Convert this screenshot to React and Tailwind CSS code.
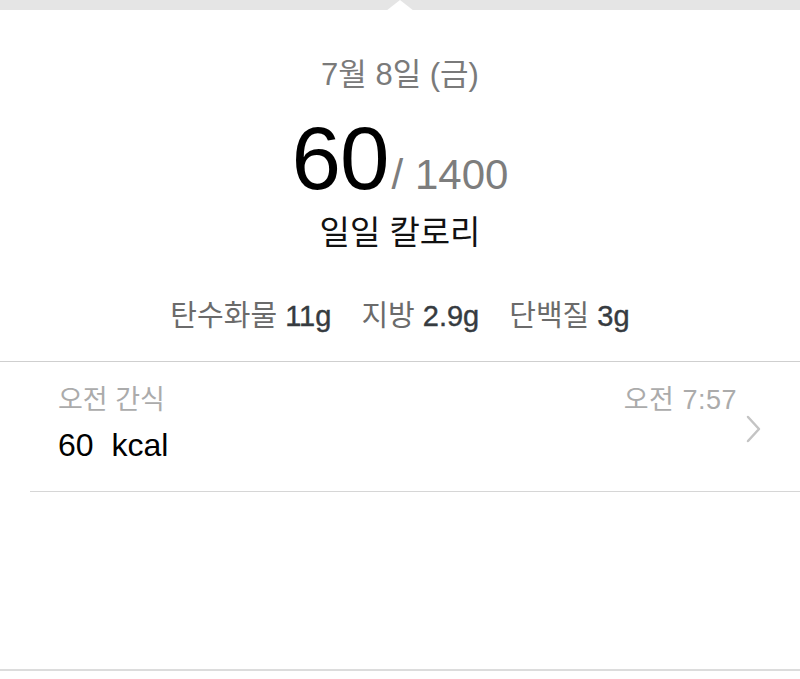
const font = { fontFamily: '"Liberation Sans", "Noto Sans CJK KR", sans-serif' };

const App = () => {
  return (
    <div className="w-[800px] h-[679px] bg-white flex flex-col overflow-hidden" style={font}>
      <div className="relative h-[10px] bg-[#e5e5e5] shrink-0">
        <div className="absolute left-[386px] top-0 w-0 h-0 border-l-[14px] border-r-[14px] border-b-[11px] border-l-transparent border-r-transparent border-b-white" />
      </div>

      <div className="flex flex-col items-center">
        <div className="mt-[47px] h-[36px] text-[31px] leading-[36px] text-[#7a7a7a]">7월 8일 (금)</div>
        <div className="mt-[26px] flex items-baseline h-[78px]">
          <span className="text-[89px] leading-[78px] text-black tracking-[-1px]">60</span>
          <span className="text-[42px] leading-[40px] text-[#7d7d7d] ml-[3px]">/ 1400</span>
        </div>
        <div className="mt-[16px] h-[40px] text-[33px] leading-[40px] text-[#111]">일일 칼로리</div>
        <div className="mt-[45px] h-[36px] text-[29px] leading-[36px] flex gap-[30px]">
          <span className="text-[#6b6b6b]">탄수화물 <span className="text-[#363b40] [-webkit-text-stroke:0.4px_#363b40]">11g</span></span>
          <span className="text-[#6b6b6b]">지방 <span className="text-[#363b40] [-webkit-text-stroke:0.4px_#363b40]">2.9g</span></span>
          <span className="text-[#6b6b6b]">단백질 <span className="text-[#363b40] [-webkit-text-stroke:0.4px_#363b40]">3g</span></span>
        </div>
      </div>

      <div className="mt-[27px] h-px bg-[#cfcfcf]" />

      <div className="flex items-center pl-[58px] pr-[38px] h-[129px]">
        <div className="flex-1 flex flex-col">
          <div className="flex justify-between h-[32px] text-[27px] leading-[32px] text-[#ababab] mt-[-8px]">
            <span>오전 간식</span>
            <span className="mr-[7px] tracking-[0.5px]">오전 7:57</span>
          </div>
          <div className="mt-[12px] h-[34px] text-[32px] leading-[34px] text-black">60&nbsp; kcal</div>
        </div>
        <svg width="16" height="28" viewBox="0 0 16 28" className="ml-[2px] mt-[4px]">
          <path d="M2 2 L13 14 L2 26" fill="none" stroke="#c4c4c4" strokeWidth="2.5" strokeLinecap="round" strokeLinejoin="round" />
        </svg>
      </div>

      <div className="ml-[30px] h-px bg-[#d6d6d6]" />

      <div className="flex-1" />
      <div className="h-[2px] bg-[#dcdcdc] mb-[8px]" />
    </div>
  );
};

export default App;
